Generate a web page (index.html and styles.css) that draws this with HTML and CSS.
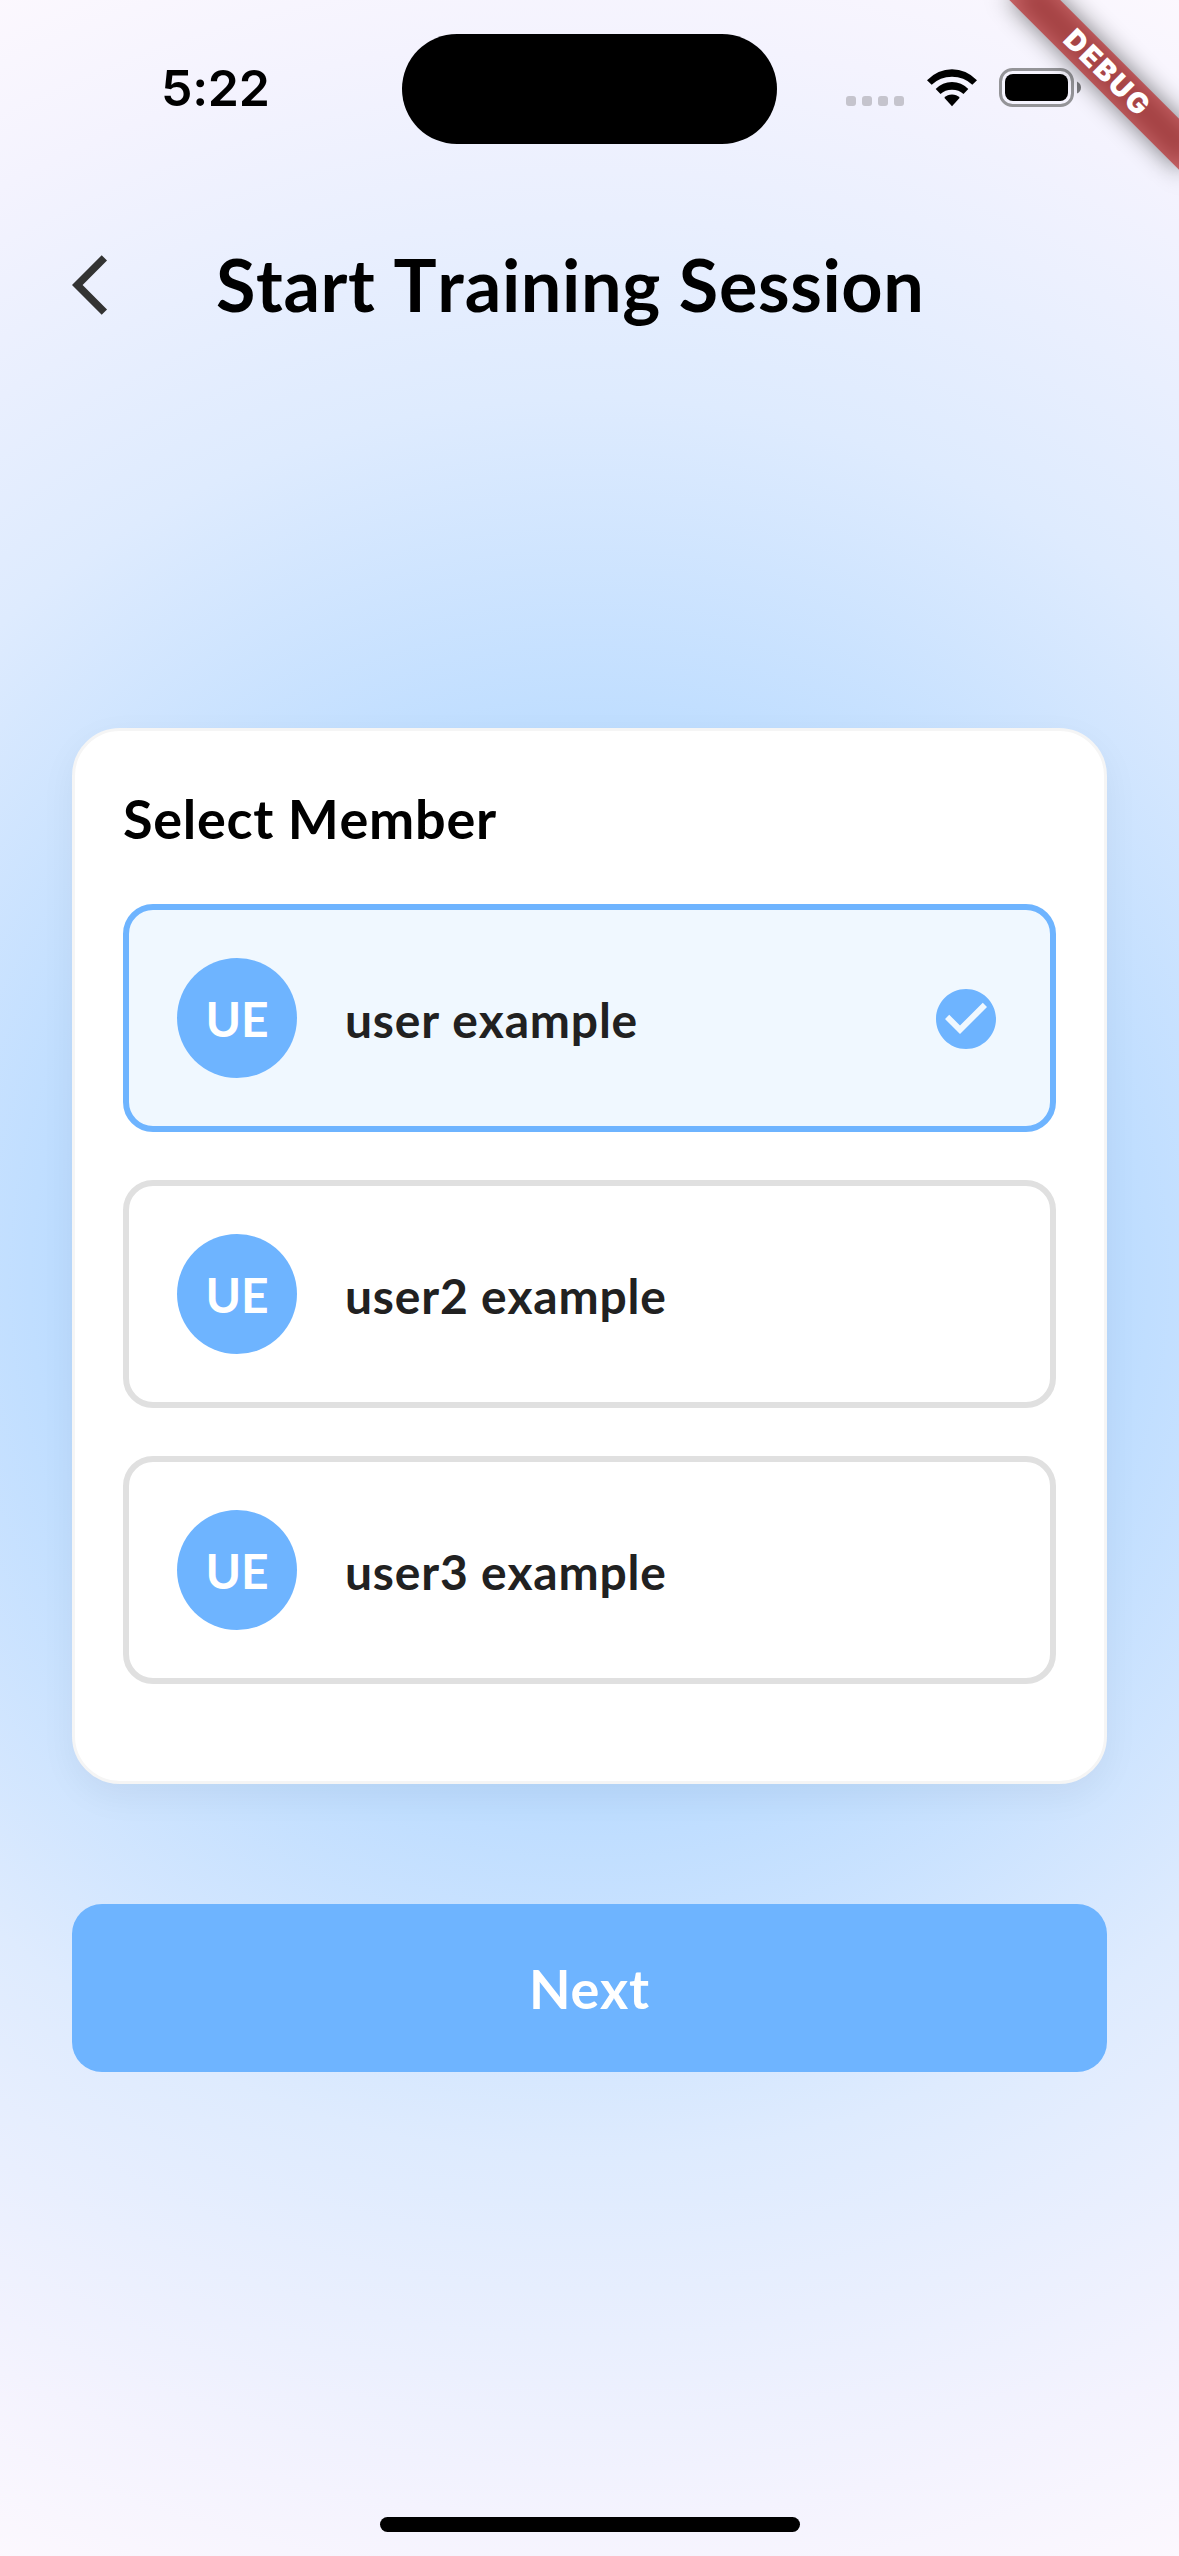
FILE: index.html
```html
<!DOCTYPE html>
<html lang="en">
<head>
<meta charset="utf-8">
<title>Start Training Session</title>
<link rel="stylesheet" href="styles.css">
</head>
<body>
<div class="screen">
  <header class="status">
    <div class="time">5:22</div>
    <div class="island"></div>
    <div class="indicators">
      <div class="dots"><i></i><i></i><i></i><i></i></div>
      <svg class="wifi" viewBox="0 0 50 38" width="50" height="38">
        <path d="M0 11.200Q11 .3 25 .3T50 11.200L45.300 15.800Q37 7.800 25 7.800T4.700 15.800Z"/>
        <path d="M8.700 20Q15.500 13 25 13T41.300 20L36.500 25Q32 20.700 25 20.700T13.500 25Z"/>
        <path d="M17.300 28.800Q20.500 25.500 25 25.500T32.700 28.800L25 37.200Z"/>
      </svg>
      <svg class="battery" viewBox="0 0 82 39" width="82" height="39">
        <rect x="1.500" y="1.500" width="72" height="36" rx="12" fill="none" stroke="#949498" stroke-width="3"/>
        <rect x="6" y="6" width="63" height="27" rx="8"/>
        <path d="M78 13.500Q82 15.500 82 19.500T78 25.500Z" fill="#7b7b7f"/>
      </svg>
    </div>
  </header>

  <nav class="appbar">
    <svg class="back" viewBox="0 0 24 24" width="72" height="72"><path d="M11.670 3.870 9.900 2.100 0 12l9.900 9.900 1.770-1.770L3.540 12z"/></svg>
    <h1>Start Training Session</h1>
  </nav>

  <main class="content">
    <section class="card">
      <h2>Select Member</h2>
      <div class="member selected">
        <span class="avatar">UE</span>
        <span class="name">user example</span>
        <svg class="check" viewBox="0 0 24 24" width="72" height="72"><path d="M12 2C6.480 2 2 6.480 2 12s4.480 10 10 10 10-4.480 10-10S17.520 2 12 2zm-2 15l-5-5 1.410-1.410L10 14.170l7.590-7.590L19 8l-9 9z"/></svg>
      </div>
      <div class="member"><span class="avatar">UE</span><span class="name">user2 example</span></div>
      <div class="member"><span class="avatar">UE</span><span class="name">user3 example</span></div>
    </section>
    <button class="next">Next</button>
  </main>

  <div class="home"></div>
  <div class="banner"><span>DEBUG</span></div>
</div>
</body>
</html>
```
FILE: styles.css
```css
* { box-sizing: border-box; }
body { margin: 0; }
h1, h2 { margin: 0; font-weight: 700; color: #000; }

.screen {
  position: relative;
  width: 1179px;
  height: 2556px;
  overflow: hidden;
  display: flex;
  flex-direction: column;
  font-family: Lato, sans-serif;
  font-kerning: none;
  background: radial-gradient(circle 1415px at 50% 50%, #8ac3ff 0, #c0deff 560px, #deebfe 880px, #f4f3fe 1240px, #fcf8fe 1415px);
}

.status {
  display: grid;
  grid-template-columns: 402px 375px 1fr;
  height: 177px;
}
.time {
  padding: 55px 0 0 161px;
  font: 600 50px/66px Inter, sans-serif;
  font-kerning: normal;
  letter-spacing: -.3px;
}
.island {
  height: 110px;
  margin-top: 34px;
  border-radius: 55px;
  background: #000;
}
.indicators {
  display: flex;
  align-items: flex-start;
  padding: 68px 0 0 69px;
}
.dots { display: flex; gap: 6px; padding-top: 28px; }
.dots i { width: 10px; height: 10px; border-radius: 3px; background: #c5c4cd; }
.wifi { margin: 1px 0 0 23px; }
.battery { margin-left: 22px; }

.appbar {
  display: flex;
  align-items: center;
  height: 216px;
  padding-left: 72px;
}
.back { fill: #333; }
.appbar h1 {
  margin-left: 72px;
  padding-bottom: 3px;
  font-size: 72px;
  line-height: 86px;
  letter-spacing: .6px;
  white-space: nowrap;
}

.content {
  display: flex;
  flex-direction: column;
  gap: 120px;
  padding: 335px 72px 0;
}
.card {
  height: 1056px;
  padding: 48px;
  border: 3px solid #f5f5f5;
  border-radius: 48px;
  background: #fff;
  box-shadow: 0 12px 36px rgba(0, 0, 0, .05);
}
.card h2 {
  height: 125px;
  padding-top: 4px;
  font-size: 54px;
  line-height: 72px;
  letter-spacing: .7px;
}
.member {
  display: flex;
  align-items: center;
  gap: 48px;
  height: 228px;
  margin-bottom: 48px;
  padding: 48px;
  border: 6px solid #e0e0e0;
  border-radius: 30px;
}
.selected { border-color: #6eb4ff; background: #f0f8ff; }
.avatar {
  display: flex;
  align-items: center;
  justify-content: center;
  width: 120px;
  height: 120px;
  border-radius: 50%;
  background: #6eb4ff;
  color: #fff;
  font-size: 48px;
  font-weight: 700;
}
.name {
  flex: 1;
  padding-top: 3px;
  color: #212121;
  font-size: 48px;
  font-weight: 700;
  letter-spacing: .8px;
}
.check { margin-top: 2px; fill: #6eb4ff; }

.next {
  height: 168px;
  border: 0;
  border-radius: 30px;
  background: #6eb4ff;
  color: #fff;
  font: 700 54px/72px Lato, sans-serif;
  letter-spacing: .9px;
  padding: 2px 0 0;
}

.home {
  position: absolute;
  left: 380px;
  bottom: 24px;
  width: 420px;
  height: 15px;
  border-radius: 8px;
  background: #000;
}

/* Corner ribbon: turned about the top right corner of the screen */
.banner {
  position: absolute;
  left: 1059px;
  top: 84px;
  width: 240px;
  height: 36px;
  transform: rotate(45deg);
  transform-origin: 120px -84px;
}
.banner::before {
  content: "";
  position: absolute;
  inset: 0;
  background: rgba(0, 0, 0, .5);
  filter: blur(12px);
}
.banner span {
  position: relative;
  display: block;
  height: 36px;
  background: rgba(183, 28, 28, .63);
  color: #fff;
  font-family: Inter, sans-serif;
  font-size: 28.500px;
  font-weight: 900;
  line-height: 36px;
  letter-spacing: 2.100px;
  text-indent: 2.100px;
  text-align: center;
}
```
